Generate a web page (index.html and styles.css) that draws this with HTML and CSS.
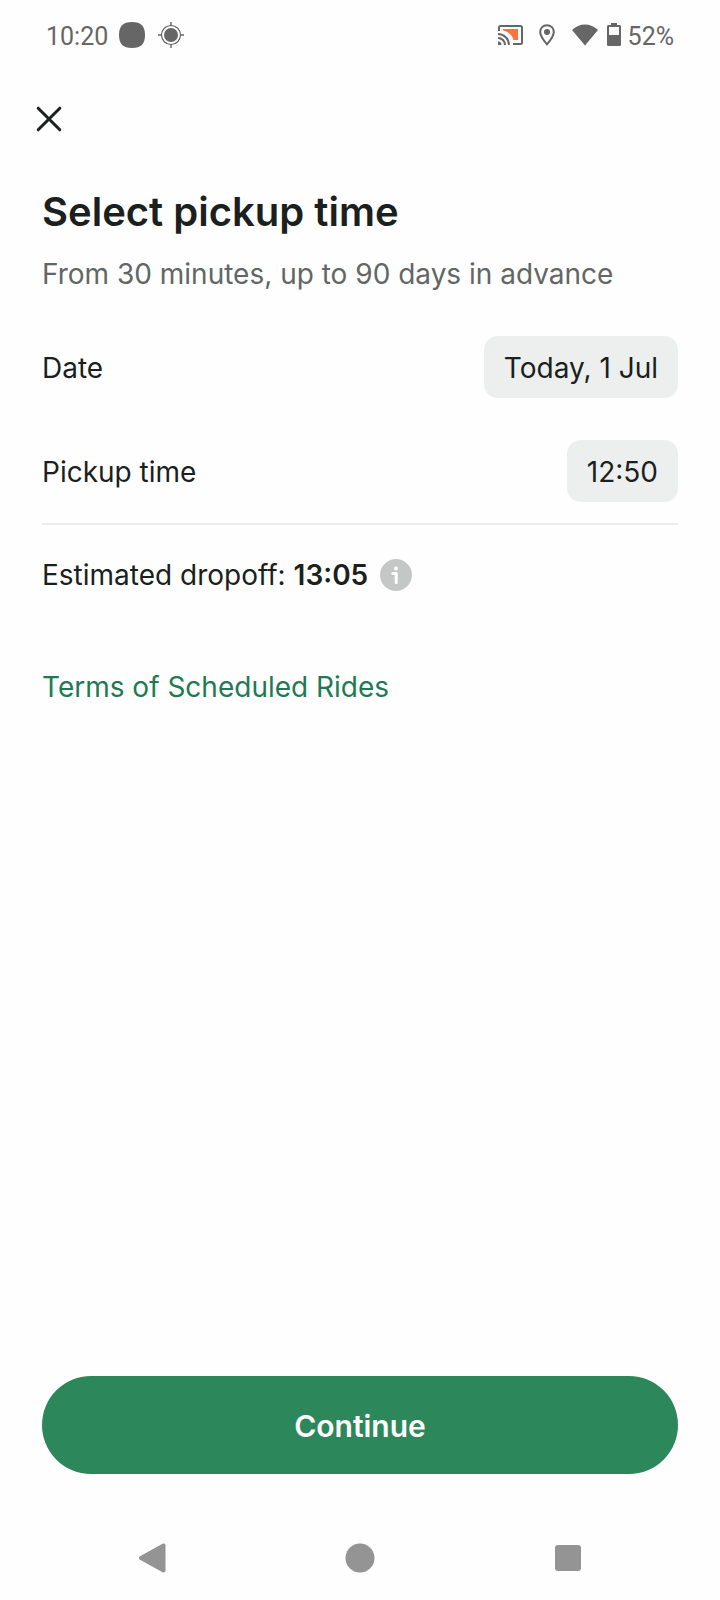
FILE: index.html
```html
<!DOCTYPE html>
<html lang="en">
<head>
    <meta charset="UTF-8">
    <meta name="viewport" content="width=device-width, initial-scale=1.0">
    <title>Select pickup time</title>
    <link rel="stylesheet" href="styles.css">
</head>
<body>
    <div class="status-bar">
        <div class="status-left">
            <span>10:20</span>
            <svg class="app-dot" width="26" height="26" viewBox="0 0 26 26">
                <path d="M13 0C22 0 26 4 26 13S22 26 13 26 0 22 0 13 4 0 13 0Z" fill="#666"/>
            </svg>
            <svg width="26" height="26" viewBox="0 0 26 26" fill="none" stroke="#666">
                <circle cx="13" cy="13" r="7" fill="#666" stroke="none"/>
                <circle cx="13" cy="13" r="9.5" stroke-width="1.2"/>
                <path d="M13 0v4M13 22v4M0 13h4M22 13h4" stroke-width="1.4"/>
            </svg>
        </div>
        <div class="status-right">
            <!-- cast -->
            <svg class="cast" width="25" height="22" viewBox="0 0 25 22" fill="none">
                <path d="M5 5H20V16H15.500C14.500 11.500 10.500 7.500 5 6.500Z" fill="#ff7043"/>
                <g stroke="#666" stroke-width="2">
                    <path d="M1 7V3.500Q1 2 2.500 2H22.500Q24 2 24 3.500V18.500Q24 20 22.500 20H15"/>
                    <path d="M0 10A11 11 0 0 1 11 21M0 14A7 7 0 0 1 7 21"/>
                </g>
                <path d="M0 17.500A3.500 3.500 0 0 1 3.500 21H0Z" fill="#666"/>
            </svg>
            <!-- location -->
            <svg class="pin" width="16" height="22" viewBox="0 0 16 22">
                <path d="M8 1.200C4 1.200 1.200 4.200 1.200 8 1.200 12.500 8 20.300 8 20.300S14.800 12.500 14.800 8C14.800 4.200 12 1.200 8 1.200Z" fill="none" stroke="#666" stroke-width="2"/>
                <circle cx="8" cy="8" r="3" fill="#666"/>
            </svg>
            <!-- wifi -->
            <svg class="wifi" width="26" height="22" viewBox="0 0 26 22">
                <path d="M13 21.500L0 6C7 -1.500 19 -1.500 26 6Z" fill="#666"/>
            </svg>
            <!-- battery -->
            <svg class="battery" width="14" height="24" viewBox="0 0 14 24">
                <path fill-rule="evenodd" d="M4 0H10V2H12.500Q14 2 14 3.500V21.500Q14 23 12.500 23H1.500Q0 23 0 21.500V3.500Q0 2 1.500 2H4ZM2 4V12H12V4Z" fill="#666"/>
            </svg>
            <span>52%</span>
        </div>
    </div>

    <main>
        <button class="close-btn" type="button" aria-label="Close">
            <svg width="26" height="26" viewBox="0 0 26 26">
                <path d="M2.200 2.200L23.800 23.800M23.800 2.200L2.200 23.800" stroke="#1b1f1d" stroke-width="3" stroke-linecap="round"/>
            </svg>
        </button>

        <h1>Select pickup time</h1>
        <p class="subtitle">From 30 minutes, up to 90 days in advance</p>

        <div class="row">
            <span id="dateLabel">Date</span>
            <button class="value-btn" type="button" aria-describedby="dateLabel">Today, 1 Jul</button>
        </div>
        <div class="row">
            <span id="timeLabel">Pickup time</span>
            <button class="value-btn" type="button" aria-describedby="timeLabel">12:50</button>
        </div>

        <div class="dropoff">
            <span>Estimated dropoff: <b>13:05</b></span>
            <button class="info-btn" type="button" aria-label="Info">
                <svg width="32" height="32" viewBox="0 0 32 32">
                    <circle cx="16" cy="16" r="16" fill="#c5c7c6"/>
                    <circle cx="16" cy="9.500" r="2" fill="#fff"/>
                    <path d="M12.800 14.500H16.200V23.500" fill="none" stroke="#fff" stroke-width="3" stroke-linecap="round" stroke-linejoin="round"/>
                </svg>
            </button>
        </div>

        <a class="terms" href="#">Terms of Scheduled Rides</a>

        <button class="continue-btn" type="button">Continue</button>
    </main>

    <nav class="nav-bar">
        <button type="button" aria-label="Back">
            <svg width="30" height="30" viewBox="0 0 30 30">
                <path d="M4 15L26.500 2.500V27.500Z" fill="#949494" stroke="#949494" stroke-width="4" stroke-linejoin="round"/>
            </svg>
        </button>
        <button type="button" aria-label="Home">
            <svg width="30" height="30" viewBox="0 0 30 30">
                <circle cx="15" cy="15" r="14.500" fill="#949494"/>
            </svg>
        </button>
        <button type="button" aria-label="Recent apps">
            <svg width="30" height="30" viewBox="0 0 30 30">
                <rect x="2" y="2" width="26" height="26" rx="3" fill="#949494"/>
            </svg>
        </button>
    </nav>
</body>
</html>
```
FILE: styles.css
```css
* {
    box-sizing: border-box;
}

body {
    display: flex;
    flex-direction: column;
    min-height: 100vh;
    margin: 0;
    background: #fefefe;
    color: #1b1f1d;
    font-family: Inter, sans-serif;
    font-size: 28px;
    line-height: 40px;
}

svg {
    display: block;
}

button {
    padding: 0;
    border: none;
    background: none;
    color: inherit;
    font: inherit;
    cursor: pointer;
}

.status-bar {
    display: flex;
    justify-content: space-between;
    height: 70px;
    padding: 0 46px;
    color: #666;
    font-family: Roboto, sans-serif;
    font-size: 25px;
}

.status-left,
.status-right {
    display: flex;
    align-items: center;
}

.status-bar span {
    padding-top: 3px;
}

.app-dot {
    margin: 0 13px 0 11px;
}

.cast {
    margin-right: 16px;
}

.pin {
    margin-right: 17px;
}

.wifi {
    margin-right: 9px;
}

.battery {
    margin-right: 7px;
}

main {
    display: flex;
    flex: 1;
    flex-direction: column;
    padding: 24px 42px 0;
}

.close-btn {
    align-self: flex-start;
    margin-left: -18px;
    padding: 12px;
}

h1 {
    margin: 42px 0 0;
    font-size: 40px;
    font-weight: 600;
    line-height: 52px;
}

.subtitle {
    margin: 16px 0 0;
    color: #626665;
}

.row {
    display: flex;
    justify-content: space-between;
    align-items: baseline;
    margin-top: 42px;
}

.value-btn {
    padding: 12px 20px 10px;
    border-radius: 14px;
    background: #edefee;
}

.dropoff {
    display: flex;
    align-items: center;
    gap: 12px;
    margin-top: 21px;
    padding-top: 30px;
    border-top: 2px solid #ececec;
}

.dropoff b {
    font-weight: 600;
}

.terms {
    align-self: flex-start;
    margin-top: 72px;
    color: #1f7a54;
    text-decoration: none;
}

.continue-btn {
    height: 98px;
    margin-top: auto;
    padding-top: 2px;
    border-radius: 49px;
    background: #2c875a;
    color: #fff;
    font-size: 30px;
    font-weight: 600;
}

.nav-bar {
    display: flex;
    justify-content: space-between;
    align-items: center;
    margin-top: 42px;
    padding: 27px 19%;
}
```
